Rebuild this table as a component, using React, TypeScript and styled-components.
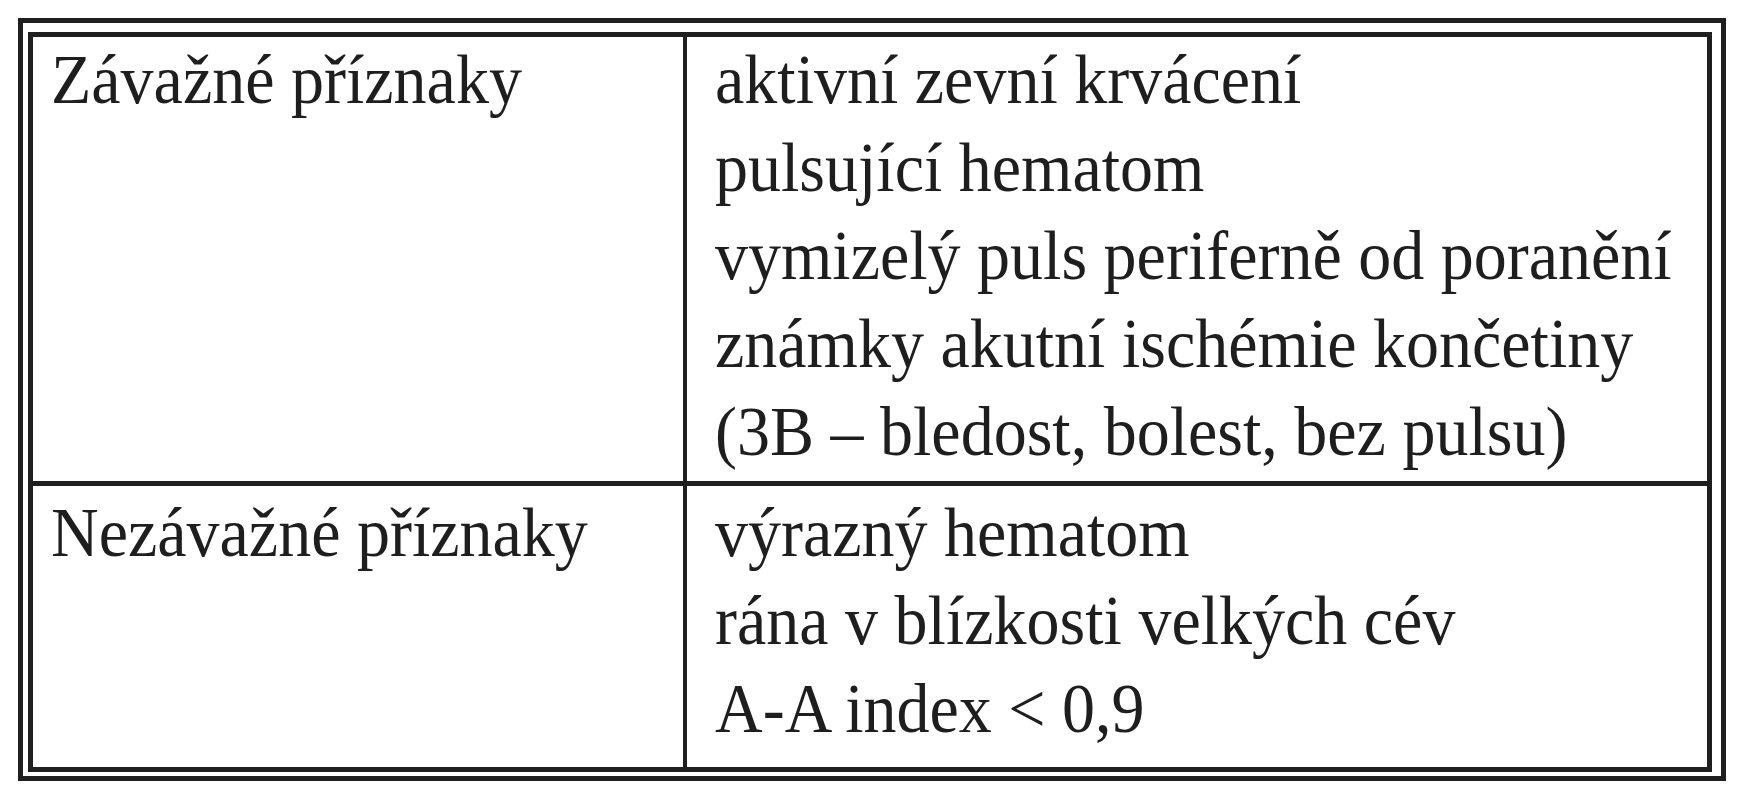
import React from "react";
import styled, { createGlobalStyle } from "styled-components";

const Global = createGlobalStyle`
  html, body {
    margin: 0;
    padding: 0;
    background: #ffffff;
  }
  body {
    font-family: "Liberation Serif", "Times New Roman", serif;
    color: #1e1e1e;
  }
`;

const Page = styled.div`
  padding: 18px 0 0 18px;
  width: 1740px;
  height: 800px;
  box-sizing: border-box;
  background: #fff;
`;

const OuterFrame = styled.div`
  width: 1708px;
  box-sizing: border-box;
  border: 5px solid #1f1f1f;
  padding: 9px 9px 4px 5px;
`;

const Table = styled.div`
  display: grid;
  grid-template-columns: 654px 1fr;
  border: 5px solid #1f1f1f;
`;

const Cell = styled.div<{ $right?: boolean; $top: number; $bottom: number; $divider?: boolean }>`
  box-sizing: border-box;
  padding: ${(p) => p.$top}px 0 ${(p) => p.$bottom}px ${(p) => (p.$right ? 28 : 18)}px;
  border-right: ${(p) => (p.$right ? "none" : "4px solid #1f1f1f")};
  border-top: ${(p) => (p.$divider ? "5px solid #1f1f1f" : "none")};
  display: flex;
  flex-direction: column;
`;

const Line = styled.div`
  font-size: 66px;
  line-height: 88px;
  height: 88px;
  white-space: nowrap;
  transform: scaleY(1.05);
  transform-origin: 0 66px;
`;

type Row = { label: string; items: string[]; top: number; bottom: number };

const rows: Row[] = [
  {
    label: "Závažné příznaky",
    items: [
      "aktivní zevní krvácení",
      "pulsující hematom",
      "vymizelý puls periferně od poranění",
      "známky akutní ischémie končetiny",
      "(3B – bledost, bolest, bez pulsu)",
    ],
    top: 0,
    bottom: 4,
  },
  {
    label: "Nezávažné příznaky",
    items: ["výrazný hematom", "rána v blízkosti velkých cév", "A-A index < 0,9"],
    top: 4,
    bottom: 13,
  },
];

export default function App() {
  return (
    <Page>
      <Global />
      <OuterFrame>
        <Table>
          {rows.map((r, i) => (
            <React.Fragment key={r.label}>
              <Cell $top={r.top} $bottom={r.bottom} $divider={i > 0}>
                <Line>{r.label}</Line>
              </Cell>
              <Cell $right $top={r.top} $bottom={r.bottom} $divider={i > 0}>
                {r.items.map((t) => (
                  <Line key={t}>{t}</Line>
                ))}
              </Cell>
            </React.Fragment>
          ))}
        </Table>
      </OuterFrame>
    </Page>
  );
}
